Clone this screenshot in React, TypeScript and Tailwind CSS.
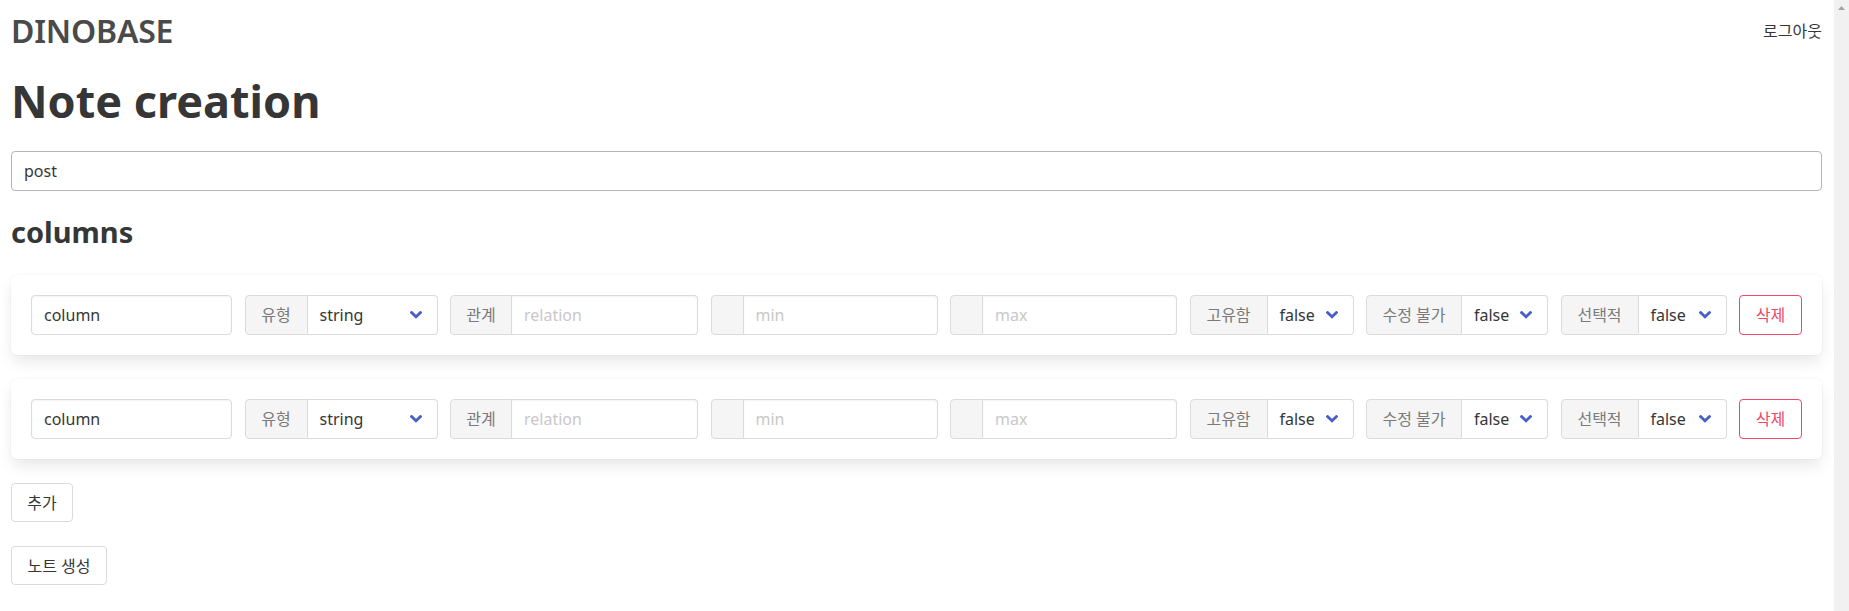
import React from "react";

const font = { fontFamily: '"Noto Sans", "Noto Sans CJK KR", sans-serif' };

function Chevron() {
    return (
        <svg width="12" height="8" viewBox="0 0 12 8" className="absolute right-[15px] top-1/2 -translate-y-1/2 pointer-events-none">
            <path d="M1.6 1.6 L6 5.8 L10.4 1.6" fill="none" stroke="#485fc7" strokeWidth="2.8" strokeLinecap="square" />
        </svg>
    );
}

function Addon({ label, width }: { label: string; width: string }) {
    return (
        <span className={`${width} h-10 flex items-center justify-center bg-[#f5f5f5] border border-[#dbdbdb] rounded-l-[4px] text-[#7a7a7a] text-base whitespace-nowrap`}>
            {label}
        </span>
    );
}

function SelectGroup({ label, value, labelW, selectW }: { label: string; value: string; labelW: string; selectW: string }) {
    return (
        <div className="flex">
            <Addon label={label} width={labelW} />
            <div className={`${selectW} relative h-10 flex items-center pl-3 border border-l-0 border-[#dbdbdb] rounded-r-[4px] bg-white text-[#363636] text-base`}>
                {value}
                <Chevron />
            </div>
        </div>
    );
}

function InputGroup({ label, placeholder, labelW, inputW }: { label: string; placeholder: string; labelW: string; inputW: string }) {
    return (
        <div className="flex">
            <Addon label={label} width={labelW} />
            <input
                placeholder={placeholder}
                className={`${inputW} h-10 pl-3 border border-l-0 border-[#dbdbdb] rounded-r-[4px] bg-white text-base text-[#363636] placeholder:text-[#c8c8c8] outline-none shadow-[inset_0_1px_2px_rgba(10,10,10,0.05)]`}
                style={font}
            />
        </div>
    );
}

function ColumnRow() {
    return (
        <div className="bg-white rounded-[6px] shadow-[0_8px_16px_-2px_rgba(10,10,10,0.1),0_0_0_1px_rgba(10,10,10,0.02)] p-5 flex items-center justify-between">
            <input
                defaultValue="column"
                className="w-[201px] h-10 pl-3 border border-[#dbdbdb] rounded-[4px] text-base text-[#363636] outline-none shadow-[inset_0_1px_2px_rgba(10,10,10,0.05)]"
                style={font}
            />
            <SelectGroup label="유형" value="string" labelW="w-[63px]" selectW="w-[130px]" />
            <InputGroup label="관계" placeholder="relation" labelW="w-[62px]" inputW="w-[186px]" />
            <InputGroup label="" placeholder="min" labelW="w-[33px]" inputW="w-[194px]" />
            <InputGroup label="" placeholder="max" labelW="w-[33px]" inputW="w-[194px]" />
            <SelectGroup label="고유함" value="false" labelW="w-[78px]" selectW="w-[86px]" />
            <SelectGroup label="수정 불가" value="false" labelW="w-[96px]" selectW="w-[86px]" />
            <SelectGroup label="선택적" value="false" labelW="w-[78px]" selectW="w-[88px]" />
            <button className="w-[63px] h-10 border border-[#f14668] rounded-[4px] text-[#f14668] text-base bg-white">
                삭제
            </button>
        </div>
    );
}

export default function App() {
    return (
        <div className="h-[611px] flex overflow-hidden bg-white text-[#363636]" style={font}>
            <div className="flex-1 min-w-0 pl-[11px] pr-3">
                <div className="flex items-center justify-between h-[62px]">
                    <span className="text-[32px] font-semibold text-[#4a4a4a] tracking-[-0.2px]">DINOBASE</span>
                    <span className="text-base text-[#363636]">로그아웃</span>
                </div>
                <h1 className="text-[45px] font-bold leading-[1.125] mt-[14px] mb-[24px]">Note creation</h1>
                <input
                    defaultValue="post"
                    className="w-full h-10 pl-3 border border-[#b5b5b5] rounded-[4px] text-base text-[#363636] outline-none"
                    style={font}
                />
                <h2 className="text-[29px] font-bold leading-[1.125] mt-[25px] mb-[27px]">columns</h2>
                <div className="flex flex-col gap-6">
                    <ColumnRow />
                    <ColumnRow />
                </div>
                <button className="mt-6 w-[62px] h-[39px] border border-[#dbdbdb] rounded-[4px] text-base bg-white">추가</button>
                <div className="mt-6">
                    <button className="w-[96px] h-[39px] border border-[#dbdbdb] rounded-[4px] text-base bg-white">노트 생성</button>
                </div>
            </div>
            <div className="w-[15px] shrink-0 bg-[#f1f1f1] flex justify-center pt-[6px]">
                <svg width="7" height="4" viewBox="0 0 7 4">
                    <path d="M0 4 L3.5 0 L7 4 Z" fill="#a3a3a3" />
                </svg>
            </div>
        </div>
    );
}
